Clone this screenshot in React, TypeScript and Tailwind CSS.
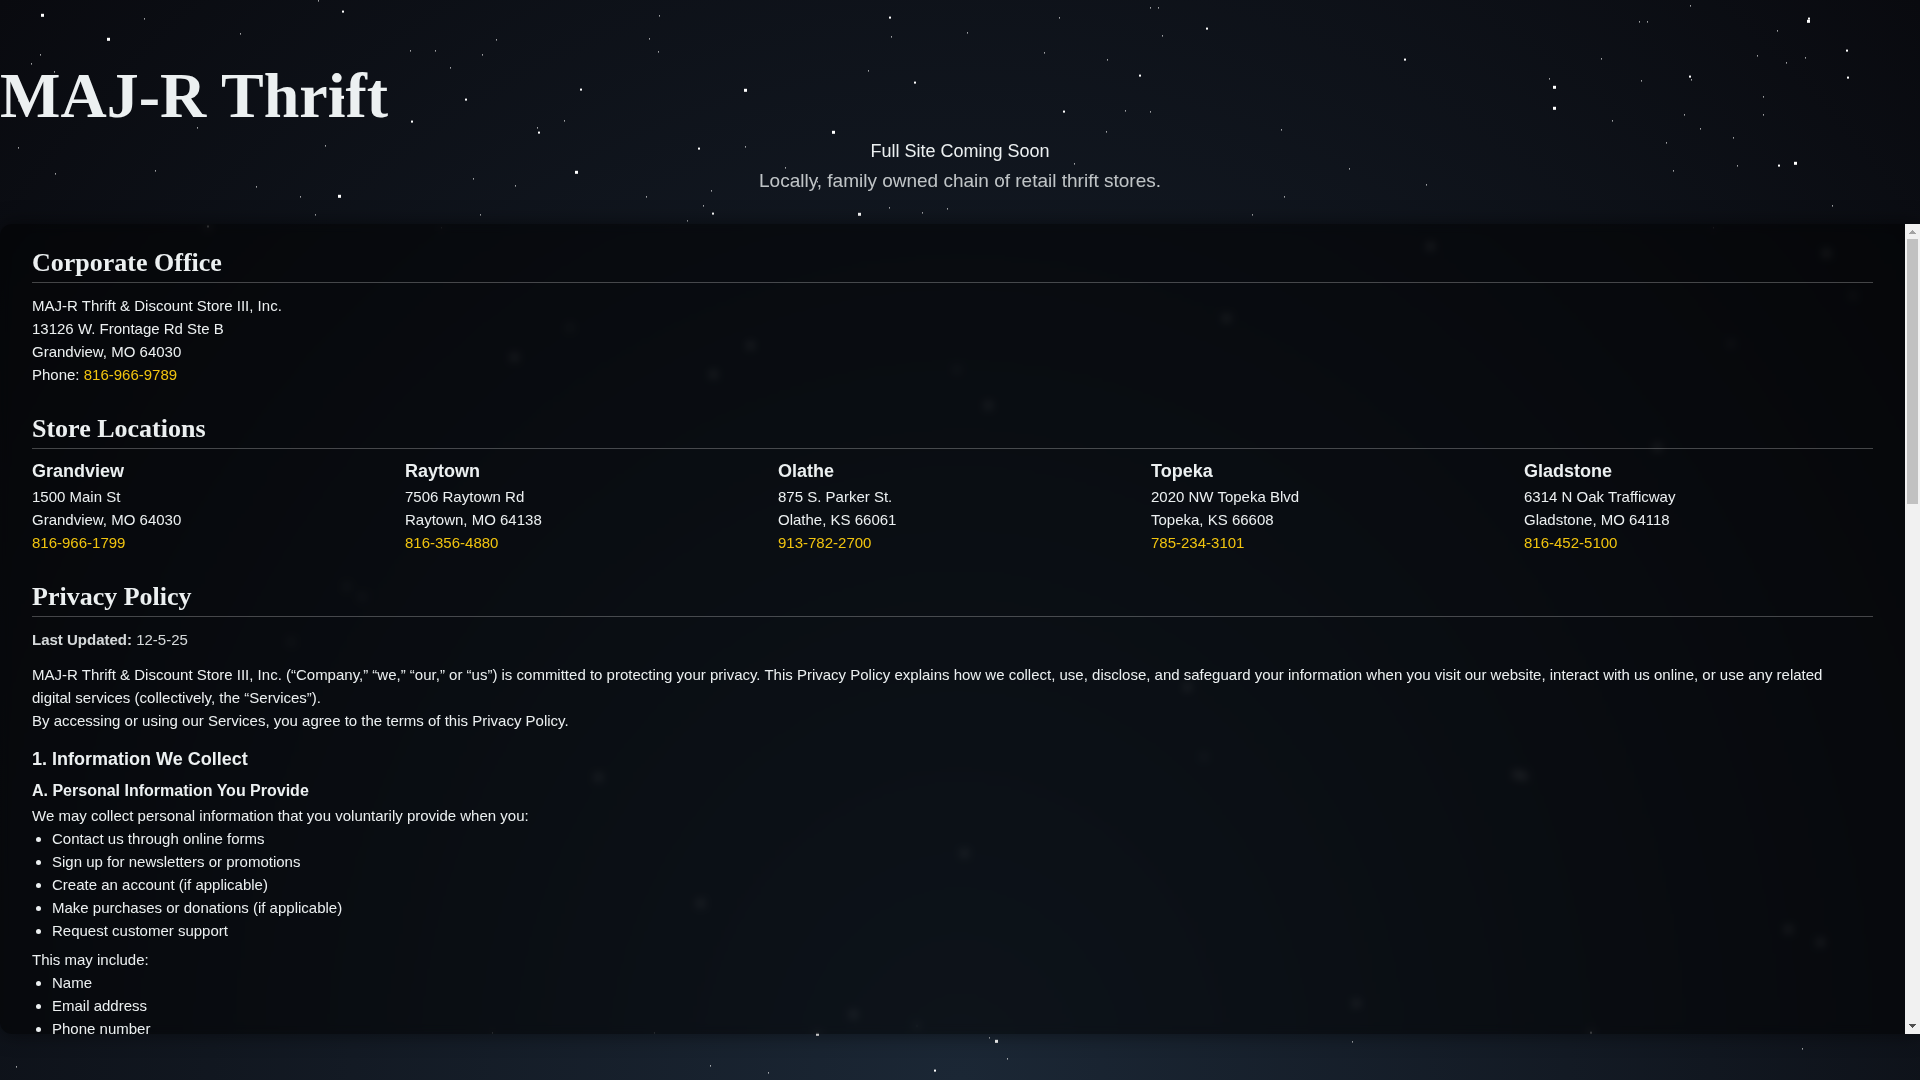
import React from 'react';

type Point = [number, number];

const SMALL_STARS: Point[] = [
  [318, 1], [144, 19], [240, 34], [40, 55], [31, 64], [54, 72], [18, 101], [410, 51], [435, 51], [496, 40],
  [482, 55], [450, 68], [197, 128], [325, 146], [537, 128], [564, 121], [18, 148], [55, 174], [155, 171],
  [256, 187], [300, 197], [315, 215], [473, 179], [515, 186], [480, 215], [441, 228], [659, 16], [649, 39],
  [658, 52], [891, 37], [967, 33], [1059, 18], [1150, 8], [1158, 8], [1162, 36], [1044, 53], [1107, 60],
  [868, 71], [1125, 111], [1150, 112], [1106, 132], [745, 147], [1074, 164], [785, 168], [711, 191],
  [646, 197], [703, 206], [687, 221], [889, 208], [922, 213], [947, 209], [1252, 215], [1000, 180],
  [817, 182], [1690, 6], [1639, 22], [1647, 22], [1777, 31], [1601, 59], [1757, 56], [1805, 58], [1786, 63],
  [1641, 81], [1691, 80], [1549, 79], [1763, 97], [1763, 115], [1684, 115], [1700, 129], [1612, 121],
  [1733, 138], [1666, 143], [1737, 166], [1673, 171], [1349, 169], [1426, 185], [1281, 130], [1284, 197],
  [1832, 206], [1713, 228], [16, 1067], [492, 1033], [710, 1066], [768, 1073], [1007, 1059], [989, 1038],
  [654, 1033], [1352, 1042], [1802, 1049]
];

const MEDIUM_STARS: Point[] = [
  [343, 12], [581, 90], [466, 100], [412, 122], [539, 133], [208, 227], [890, 18], [1207, 29], [915, 83],
  [1140, 76], [1064, 112], [699, 149], [713, 214], [1405, 60], [1809, 19], [1847, 51], [1848, 78],
  [1690, 77], [1779, 166], [935, 1071], [917, 1026], [1591, 1033], [570, 328], [957, 370], [347, 587],
  [362, 597], [291, 642], [1204, 757], [1853, 296], [1731, 344]
];

const LARGE_STARS: Point[] = [
  [42, 15], [108, 39], [342, 97], [576, 172], [339, 196], [745, 90], [833, 132], [859, 214], [1808, 21],
  [1554, 87], [1554, 108], [1795, 163], [817, 1034], [996, 1041], [1826, 253], [1430, 246], [1657, 447],
  [514, 357], [713, 374], [1226, 318], [988, 405], [700, 903], [1516, 774], [1523, 776], [964, 853],
  [598, 777], [1187, 687], [1788, 929], [1820, 942], [1356, 1003], [853, 1014], [750, 345]
];

interface Store {
  name: string;
  street: string;
  city: string;
  phone: string;
}

const stores: Store[] = [
  { name: 'Grandview', street: '1500 Main St', city: 'Grandview, MO 64030', phone: '816-966-1799' },
  { name: 'Raytown', street: '7506 Raytown Rd', city: 'Raytown, MO 64138', phone: '816-356-4880' },
  { name: 'Olathe', street: '875 S. Parker St.', city: 'Olathe, KS 66061', phone: '913-782-2700' },
  { name: 'Topeka', street: '2020 NW Topeka Blvd', city: 'Topeka, KS 66608', phone: '785-234-3101' },
  { name: 'Gladstone', street: '6314 N Oak Trafficway', city: 'Gladstone, MO 64118', phone: '816-452-5100' }
];

const collectWhen = [
  'Contact us through online forms',
  'Sign up for newsletters or promotions',
  'Create an account (if applicable)',
  'Make purchases or donations (if applicable)',
  'Request customer support'
];

const mayInclude = ['Name', 'Email address', 'Phone number'];

const StarField = () => (
  <svg className="fixed inset-0 h-full w-full" fill="#fff" aria-hidden="true">
    {SMALL_STARS.map(([x, y]) => (
      <rect key={`s${x}-${y}`} x={x} y={y - 0.6} width="1" height="1" />
    ))}
    {MEDIUM_STARS.map(([x, y]) => (
      <rect key={`m${x}-${y}`} x={x - 1} y={y - 1.4} width="2" height="2" />
    ))}
    {LARGE_STARS.map(([x, y]) => (
      <rect key={`l${x}-${y}`} x={x - 1} y={y - 1.2} width="3" height="3" />
    ))}
  </svg>
);

const PhoneLink = ({ phone }: { phone: string }) => (
  <a href={`tel:${phone}`} className="text-[#f1c40f]">
    {phone}
  </a>
);

const SectionTitle = ({ children }: { children: React.ReactNode }) => (
  <h2 className="mb-[11px] border-b border-white/25 pb-1 font-['Liberation_Serif',serif] text-[26px] leading-[30px] font-bold">
    {children}
  </h2>
);

const BulletList = ({ items }: { items: string[] }) => (
  <ul className="mb-1.5 list-disc pl-5">
    {items.map((item) => (
      <li key={item}>{item}</li>
    ))}
  </ul>
);

const Scrollbar = () => (
  <div className="flex w-[15px] shrink-0 flex-col bg-[#f1f1f1]" aria-hidden="true">
    <svg className="size-[15px]" viewBox="0 0 15 15" fill="#a3a3a3" shapeRendering="crispEdges">
      <path d="M7 6h1v1h1v1h1v1h1v1H4V9h1V8h1V7h1z" />
    </svg>
    <div className="flex-1 px-0.5">
      <div className="h-[34%] bg-[#c1c1c1]" />
    </div>
    <svg className="size-[15px]" viewBox="0 0 15 15" fill="#505050" shapeRendering="crispEdges">
      <path d="M4 5h7v1h-1v1H9v1H8v1H7V8H6V7H5V6H4z" />
    </svg>
  </div>
);

export default function App() {
  return (
    <div className="flex h-screen flex-col overflow-hidden bg-[radial-gradient(ellipse_at_bottom,#1b2735_0%,#090a0f_100%)] font-['Liberation_Sans',sans-serif] text-[#ecf0f1]">
      <StarField />

      <header className="relative pt-14 pb-7">
        <h1 className="font-['Liberation_Serif',serif] text-[64px] leading-20 font-bold">MAJ-R Thrift</h1>
        <div className="text-center">
          <p className="text-[18px] leading-[30px]">Full Site Coming Soon</p>
          <p className="text-[19px] leading-[30px] opacity-80">Locally, family owned chain of retail thrift stores.</p>
        </div>
      </header>

      {/* Scrollable info panel */}
      <main className="relative flex h-[75vh] rounded-l-xl bg-black/50 text-[15px] leading-[23px] shadow-[0_0_20px_rgba(0,0,0,0.5)] backdrop-blur-[5px]">
        <div className="min-w-0 flex-1 overflow-y-auto px-8 pt-6 [scrollbar-width:none]">
          <section className="mb-7">
            <SectionTitle>Corporate Office</SectionTitle>
            <address className="not-italic">
              MAJ-R Thrift &amp; Discount Store III, Inc.
              <br />
              13126 W. Frontage Rd Ste B
              <br />
              Grandview, MO 64030
              <br />
              Phone: <PhoneLink phone="816-966-9789" />
            </address>
          </section>

          <section className="mb-7">
            <SectionTitle>Store Locations</SectionTitle>
            <div className="grid grid-cols-5 gap-6">
              {stores.map((store) => (
                <div key={store.name}>
                  <h3 className="mb-0.5 text-[18px] leading-[23px] font-bold">{store.name}</h3>
                  <p>{store.street}</p>
                  <p>{store.city}</p>
                  <p>
                    <PhoneLink phone={store.phone} />
                  </p>
                </div>
              ))}
            </div>
          </section>

          <section>
            <SectionTitle>Privacy Policy</SectionTitle>
            <p className="mb-3 opacity-90">
              <strong>Last Updated:</strong> 12-5-25
            </p>
            <p className="pr-4">
              MAJ-R Thrift &amp; Discount Store III, Inc. (“Company,” “we,” “our,” or “us”) is committed to protecting
              your privacy. This Privacy Policy explains how we collect, use, disclose, and safeguard your information
              when you visit our website, interact with us online, or use any related digital services (collectively,
              the “Services”).
            </p>
            <p>By accessing or using our Services, you agree to the terms of this Privacy Policy.</p>

            <h3 className="mt-4 mb-2 text-[18px] leading-[23px] font-bold">1. Information We Collect</h3>
            <h4 className="mb-0.5 text-[16px] leading-[23px] font-bold">A. Personal Information You Provide</h4>
            <p>We may collect personal information that you voluntarily provide when you:</p>
            <BulletList items={collectWhen} />
            <p>This may include:</p>
            <BulletList items={mayInclude} />
          </section>
        </div>
        <Scrollbar />
      </main>
    </div>
  );
}
